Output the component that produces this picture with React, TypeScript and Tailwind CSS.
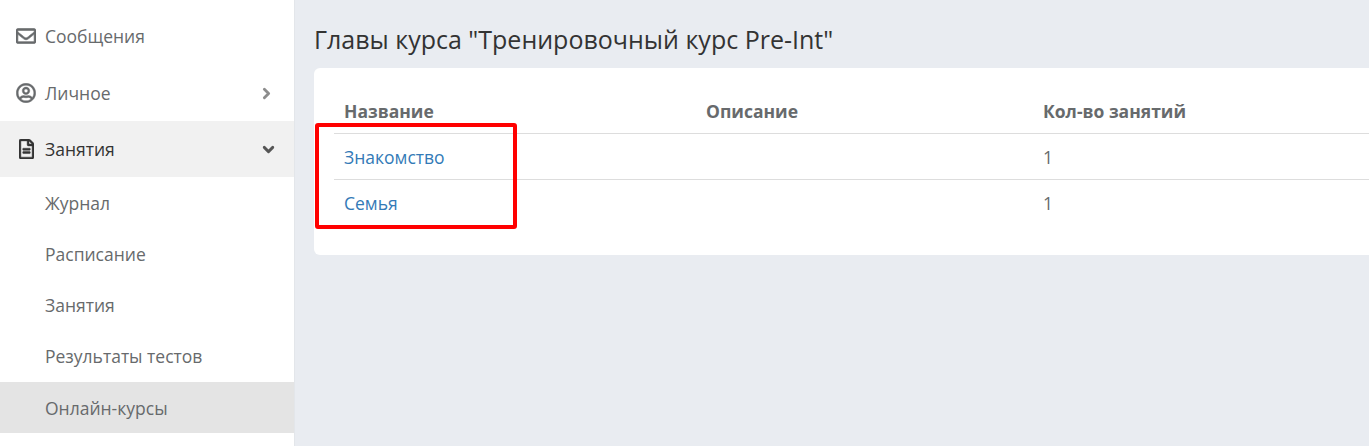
import { FaRegEnvelope, FaRegUserCircle, FaRegFileAlt } from "react-icons/fa";
import { ChevronRight, ChevronDown } from "lucide-react";

const subItems = ["Журнал", "Расписание", "Занятия", "Результаты тестов", "Онлайн-курсы"];

const chapters = [
  { name: "Знакомство", count: 1 },
  { name: "Семья", count: 1 },
];

function Sidebar() {
  return (
    <aside className="w-[295px] shrink-0 h-full bg-white border-r border-[#e3e6ea] pt-[9px] text-[17.5px] text-[#676a6c]">
      <div className="h-14 flex items-center pl-4 pb-0.5">
        <FaRegEnvelope className="w-5 h-5 mr-[9px] stroke-current stroke-[16]" />
        <span>Сообщения</span>
      </div>
      <div className="h-14 flex items-center pl-4 pr-[19px]">
        <FaRegUserCircle className="w-5 h-5 mr-[9px] stroke-current stroke-[12]" />
        <span>Личное</span>
        <ChevronRight className="w-[17px] h-[17px] ml-auto text-[#8d8d8d]" strokeWidth={4} />
      </div>
      <div className="h-14 flex items-center pl-[19px] pr-[17px] bg-[#f1f1f1] text-[#333333]">
        <FaRegFileAlt className="w-[15px] h-5 mr-[11px] stroke-current stroke-[12]" />
        <span>Занятия</span>
        <ChevronDown className="w-[17px] h-[17px] ml-auto text-[#555555]" strokeWidth={4} />
      </div>
      {subItems.map((item) => (
        <div
          key={item}
          className={`flex items-center pl-[45px] pt-px ${item === "Результаты тестов" ? "h-[52px]" : "h-[51px]"} ${item === "Онлайн-курсы" ? "bg-[#e4e4e4]" : ""}`}
        >
          {item}
        </div>
      ))}
    </aside>
  );
}

export default function App() {
  return (
    <div className="w-[1369px] h-[446px] flex overflow-hidden bg-[#e9ecf1] font-['Open_Sans',sans-serif]">
      <Sidebar />
      <main className="flex-1 pl-[19px] min-w-0">
        <h1 className="h-[68px] pt-[22px] text-[25px] leading-[34px] font-normal text-[#333333]">
          Главы курса "Тренировочный курс Pre-Int"
        </h1>
        <div className="relative h-[187px] bg-white rounded-l-md pl-5 pt-[25px]">
          <table className="w-[1035px] table-fixed text-[17.5px] text-[#676a6c]">
            <thead>
              <tr className="h-10 border-b border-[#dddddd] text-left">
                <th className="w-[362px] pl-2.5 pb-1 font-bold">Название</th>
                <th className="w-[337px] pl-2.5 pb-1 font-bold">Описание</th>
                <th className="pl-2.5 pb-1 font-bold">Кол-во занятий</th>
              </tr>
            </thead>
            <tbody>
              {chapters.map((c, i) => (
                <tr key={c.name} className={`h-[46px] ${i === 0 ? "border-b border-[#dddddd]" : ""}`}>
                  <td className="pl-2.5 pt-0.5 text-[#337ab7]">{c.name}</td>
                  <td className="pl-2.5 pt-0.5"></td>
                  <td className="pl-2.5 pt-0.5">{c.count}</td>
                </tr>
              ))}
            </tbody>
          </table>
          {/* red annotation over the table */}
          <div className="absolute left-px top-[55px] w-[202px] h-[106px] border-[4px] border-[#ff0000] rounded-[3px]" />
        </div>
      </main>
    </div>
  );
}
